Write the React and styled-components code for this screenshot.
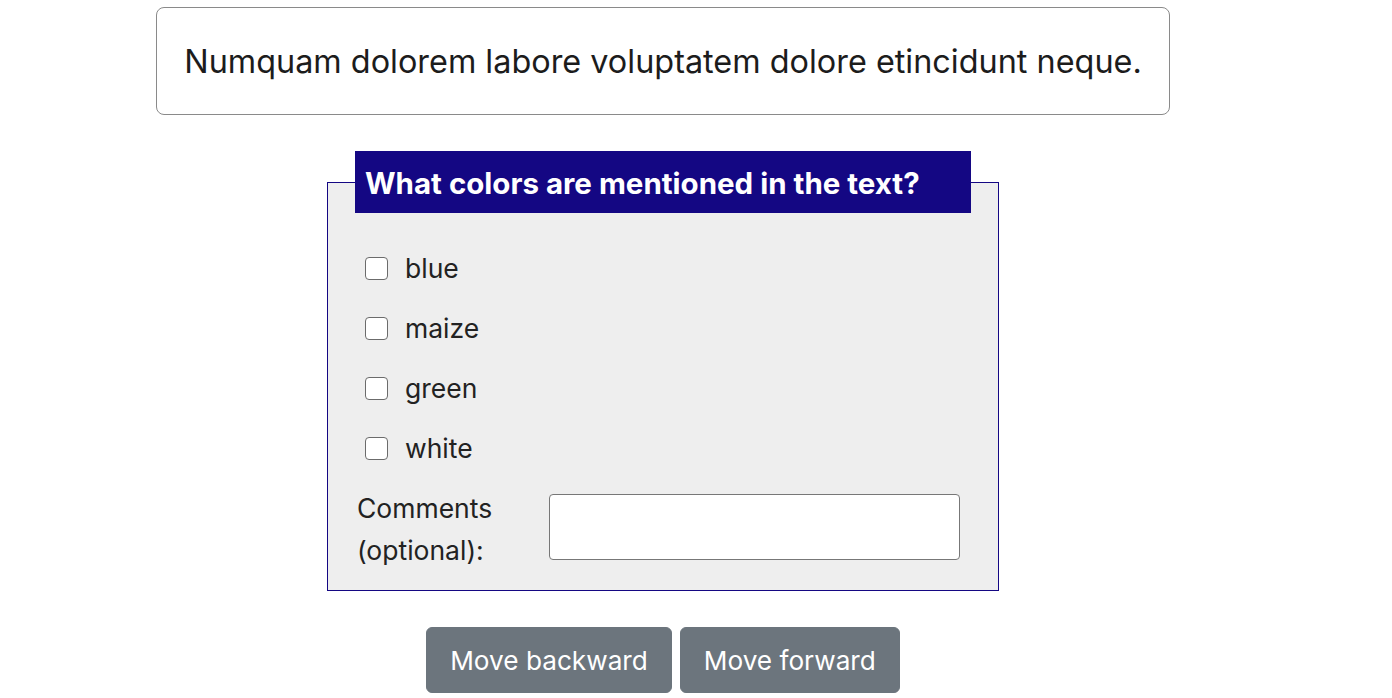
import React from "react";
import styled, { createGlobalStyle } from "styled-components";

const GlobalStyle = createGlobalStyle`
  body {
    margin: 0;
    background: #fff;
    font-family: Inter, "Noto Sans", sans-serif;
    color: #212529;
  }
`;

const Page = styled.main`
  width: 1326px;
  display: flex;
  flex-direction: column;
  align-items: center;
  padding-top: 7px;
`;

const Passage = styled.div`
  box-sizing: border-box;
  width: 1014px;
  height: 108px;
  border: 1px solid #8a8a8a;
  border-radius: 8px;
  display: flex;
  align-items: center;
  justify-content: center;
  font-size: 32.4px;
  color: #1c1c1c;
`;

const Question = styled.fieldset`
  box-sizing: border-box;
  width: 672px;
  margin: 36px 0 0;
  padding: 25px 38px 19px 29px;
  background: #eeeeee;
  border: 1px solid #140783;
  min-width: 0;
`;

const Legend = styled.legend`
  box-sizing: border-box;
  width: 616px;
  height: 62px;
  margin-left: -2px;
  padding: 0 10px;
  background: #140783;
  color: #fff;
  font-size: 29.5px;
  font-weight: 700;
  line-height: 64px;
`;

const Option = styled.label`
  display: flex;
  align-items: center;
  gap: 17px;
  height: 60px;
  padding-left: 8px;
  font-size: 26.5px;
  color: #222;
`;

const Box = styled.input`
  appearance: none;
  box-sizing: border-box;
  width: 23px;
  height: 23px;
  margin: 0;
  background: #fff;
  border: 1.5px solid #6b6b6b;
  border-radius: 4px;
`;

const CommentRow = styled.div`
  display: flex;
  align-items: center;
  margin-top: 9px;
`;

const CommentLabel = styled.label`
  width: 192px;
  font-size: 26.5px;
  line-height: 42px;
  color: #222;
`;

const CommentInput = styled.input`
  box-sizing: border-box;
  width: 412px;
  height: 66px;
  margin-top: -4px;
  border: 1px solid #777;
  border-radius: 4px;
  background: #fff;
`;

const Buttons = styled.div`
  display: flex;
  gap: 8px;
  margin-top: 36px;
`;

const Button = styled.button`
  height: 66px;
  padding: 0 ${(p) => p.$pad}px;
  background: #6c757d;
  border: 1px solid #6c757d;
  border-radius: 6px;
  color: #fff;
  font-family: inherit;
  font-size: 26.2px;
`;

const colors = ["blue", "maize", "green", "white"];

export default function App() {
  return (
    <>
      <GlobalStyle />
      <Page>
        <Passage>Numquam dolorem labore voluptatem dolore etincidunt neque.</Passage>
        <Question>
          <Legend>What colors are mentioned in the text?</Legend>
          {colors.map((c) => (
            <Option key={c}>
              <Box type="checkbox" />
              {c}
            </Option>
          ))}
          <CommentRow>
            <CommentLabel htmlFor="comments">
              Comments
              <br />
              (optional):
            </CommentLabel>
            <CommentInput id="comments" type="text" />
          </CommentRow>
        </Question>
        <Buttons>
          <Button $pad={23}>Move backward</Button>
          <Button $pad={23}>Move forward</Button>
        </Buttons>
      </Page>
    </>
  );
}
